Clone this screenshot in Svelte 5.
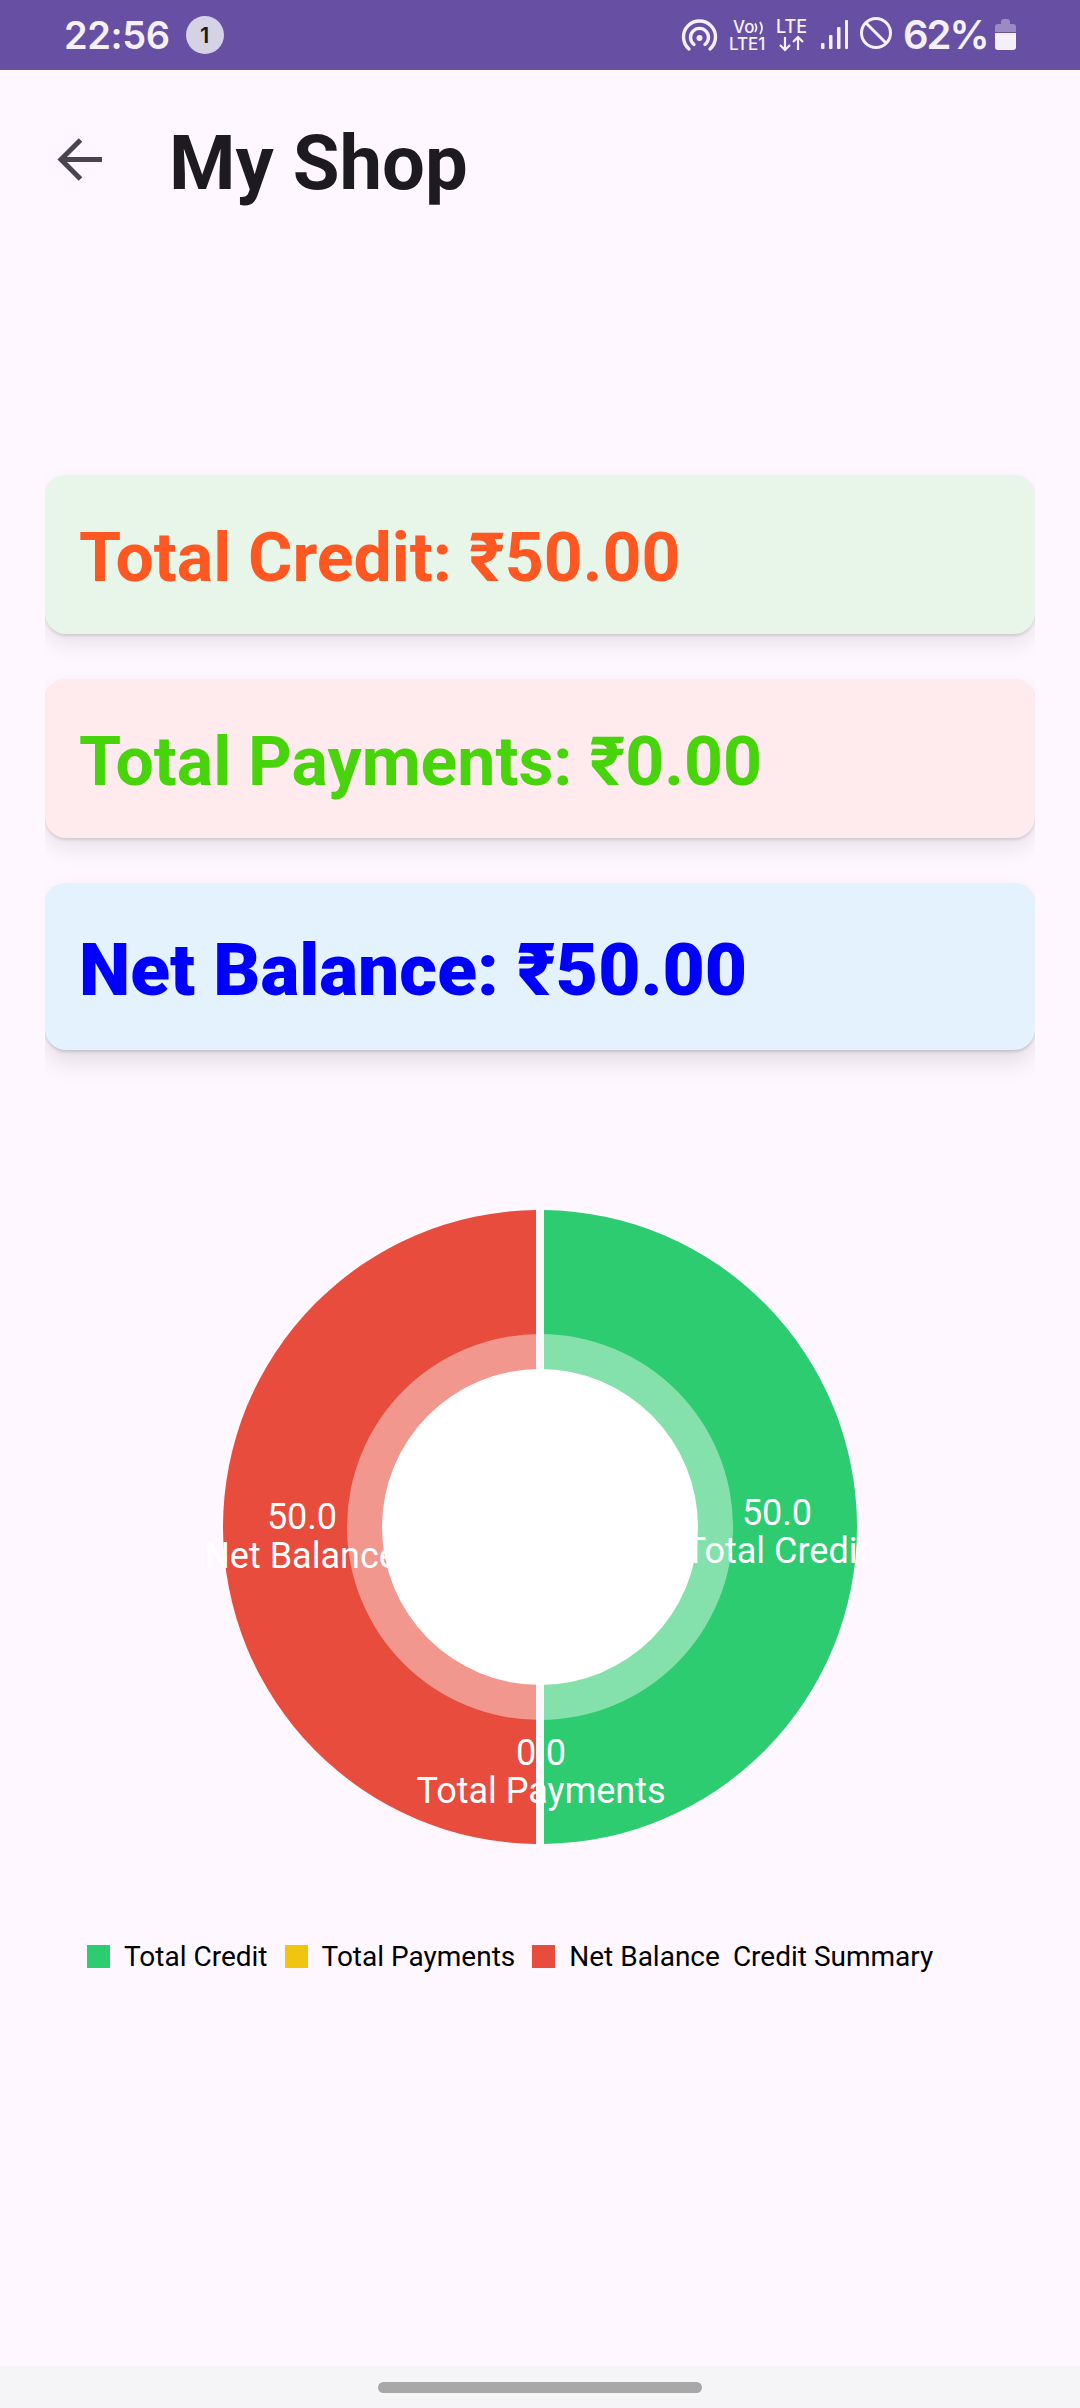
<script>
	const cx = 540;
	const cy = 1526 - 1180;

	// half rings, split by the slice gap down the middle
	function half(r, side) {
		const x = 4 * side;
		const dy = Math.sqrt(r * r - 16);
		const sweep = side > 0 ? 1 : 0;
		return `M${cx + x} ${cy - dy}A${r} ${r} 0 0 ${sweep} ${cx + x} ${cy + dy}Z`;
	}

	const cards = [
		{ label: 'Total Credit: ₹50.00', kind: 'credit' },
		{ label: 'Total Payments: ₹0.00', kind: 'payments' },
		{ label: 'Net Balance: ₹50.00', kind: 'balance' }
	];

	const legend = [
		{ label: 'Total Credit', color: '#2ecc71' },
		{ label: 'Total Payments', color: '#f1c40f' },
		{ label: 'Net Balance', color: '#e74c3c' }
	];
</script>

<div class="screen">
	<div class="statusbar">
		<span class="time">22:56</span>
		<span class="badge">1</span>
		<svg class="status-icons" width="350" height="70" viewBox="670 0 350 70">
			<g fill="none" stroke="#f3f0fa" stroke-width="3.4" stroke-linecap="round">
				<path d="M689 49A16 16 0 1 1 710 49" />
				<path d="M694 44.5A9 9 0 1 1 705 44.5" />
			</g>
			<circle cx="699.5" cy="38" r="3" fill="#f3f0fa" />
			<g class="tiny" fill="#f3f0fa">
				<text x="733" y="33">Vo</text>
				<text x="729" y="50">LTE1</text>
				<text x="776" y="33" class="lte">LTE</text>
			</g>
			<g fill="none" stroke="#f3f0fa" stroke-width="1.8">
				<path d="M755 23.5q3 4 0 8.5M760 22q4 6 0 12" />
			</g>
			<g fill="none" stroke="#f3f0fa" stroke-width="2.2">
				<path d="M785 37v13M780 45l5 5 5-5" />
				<path d="M798 50v-13M793 42l5-5 5 5" />
			</g>
			<g fill="#f3f0fa">
				<rect x="821" y="43" width="3.5" height="6" rx="1" />
				<rect x="829" y="35" width="3.5" height="14" rx="1" />
				<rect x="837" y="27" width="3.5" height="22" rx="1" />
				<rect x="845" y="20" width="3" height="29" rx="1" />
			</g>
			<circle cx="876" cy="33" r="14.5" fill="none" stroke="#f3f0fa" stroke-width="3" />
			<path d="M866 23l20 20" stroke="#f3f0fa" stroke-width="3" />
			<text class="percent" x="903" y="49" fill="#f3f0fa">62%</text>
			<path d="M1001 22a3 3 0 0 1 3-3h3a3 3 0 0 1 3 3v2h3a3 3 0 0 1 3 3v5h-21v-5a3 3 0 0 1 3-3h3z" fill="#9c8ac4" />
			<path d="M995 33h21v14a3 3 0 0 1-3 3h-15a3 3 0 0 1-3-3z" fill="#f3f0fa" />
		</svg>
	</div>

	<header class="topbar">
		<svg class="back" width="46" height="46" viewBox="0 0 46 46">
			<path d="M45 22.5H5M23.5 3 4 22.5 23.5 42" fill="none" stroke="#49454f" stroke-width="5" />
		</svg>
		<h1>My Shop</h1>
	</header>

	<main>
		<div class="cards">
			{#each cards as card}
				<div class="card {card.kind}">{card.label}</div>
			{/each}
		</div>

		<svg class="chart" width="1080" height="690" viewBox="0 0 1080 690">
			<path d={half(317, 1)} fill="#2ecc71" />
			<path d={half(317, -1)} fill="#e74c3c" />
			<circle cx={cx} cy={cy} r="193" fill="#fff" opacity="0.42" />
			<circle cx={cx} cy={cy} r="158" fill="#fff" />
			<rect x={cx - 4} y={cy - 193} width="8" height="35" fill="#fef7ff" />
			<rect x={cx - 4} y={cy + 158} width="8" height="35" fill="#fef7ff" />
			<g class="slice-label" fill="#fff" text-anchor="middle">
				<text x="777" y="344">50.0</text>
				<text x="777" y="382">Total Credit</text>
				<text x="302" y="348">50.0</text>
				<text x="301" y="387">Net Balance</text>
				<text x="541" y="584">0.0</text>
				<text x="541" y="622">Total Payments</text>
			</g>
		</svg>

		<div class="legend">
			{#each legend as item}
				<span class="swatch" style="background: {item.color}"></span>
				<span class="legend-label">{item.label}</span>
			{/each}
			<span class="legend-label description">Credit Summary</span>
		</div>
	</main>

	<div class="navbar"><span class="pill"></span></div>
</div>

<style>
	:global(body) {
		margin: 0;
		background: #fef7ff;
	}

	.screen {
		width: 1080px;
		height: 2408px;
		display: flex;
		flex-direction: column;
		font-family: Roboto, sans-serif;
		background: #fef7ff;
		overflow: hidden;
	}

	.statusbar {
		height: 70px;
		flex: none;
		display: flex;
		align-items: center;
		background: #6750a4;
		padding-left: 64px;
		font-family: Inter, sans-serif;
	}

	.time {
		font-size: 38px;
		font-weight: 600;
		letter-spacing: -0.4px;
		color: #f3f0fa;
	}

	.badge {
		width: 38px;
		height: 38px;
		margin-left: 16px;
		border-radius: 50%;
		background: #d6d2e6;
		color: #1d1b20;
		font-size: 22px;
		font-weight: 600;
		display: flex;
		align-items: center;
		justify-content: center;
	}

	.status-icons {
		margin-left: auto;
		margin-right: 60px;
	}

	.tiny text {
		font-size: 17px;
		font-weight: 500;
	}

	.tiny .lte {
		font-size: 18px;
	}

	.percent {
		font-size: 40px;
		font-weight: 600;
		letter-spacing: -2px;
	}

	.topbar {
		height: 180px;
		flex: none;
		display: flex;
		align-items: center;
		padding-left: 57px;
	}

	.back {
		flex: none;
	}

	h1 {
		margin: 5px 0 0 66px;
		font-size: 76px;
		font-weight: 700;
		color: #1d1b20;
	}

	main {
		flex: 1;
		padding-top: 225px;
	}

	.cards {
		display: flex;
		flex-direction: column;
		gap: 45px;
		margin: 0 45px;
	}

	.card {
		height: 159px;
		box-sizing: border-box;
		display: flex;
		align-items: center;
		padding: 6px 0 0 34px;
		border-radius: 21px;
		font-size: 68px;
		font-weight: 700;
		box-shadow: 0 2px 3px rgba(0, 0, 0, 0.12), 0 10px 22px rgba(0, 0, 0, 0.09);
		/* shadow only shows above and below, the sides are cut at the card edge */
		clip-path: inset(-40px 0);
	}

	.credit {
		background: #e8f5e9;
		color: #ff5722;
	}

	.payments {
		background: #ffebee;
		color: #47d40a;
	}

	.balance {
		height: 167px;
		background: #e3f2fd;
		color: #0000ff;
		font-size: 73px;
		font-weight: 900;
		box-shadow: 0 2px 3px rgba(0, 0, 0, 0.14), 0 12px 24px rgba(0, 0, 0, 0.11);
	}

	.chart {
		display: block;
		margin-top: 131px;
	}

	.slice-label {
		font-size: 36px;
	}

	.legend {
		display: flex;
		align-items: center;
		margin: 69px 0 0 87px;
		font-size: 28px;
		color: #000;
	}

	.swatch {
		width: 23px;
		height: 23px;
		margin-right: 14px;
	}

	.legend-label {
		margin-right: 17px;
	}

	.description {
		margin-left: -4px;
	}

	.navbar {
		height: 42px;
		flex: none;
		background: #f5f5f7;
		display: flex;
		justify-content: center;
		padding-top: 16px;
		box-sizing: border-box;
	}

	.pill {
		width: 324px;
		height: 11px;
		border-radius: 6px;
		background: #a8a8a8;
	}
</style>
